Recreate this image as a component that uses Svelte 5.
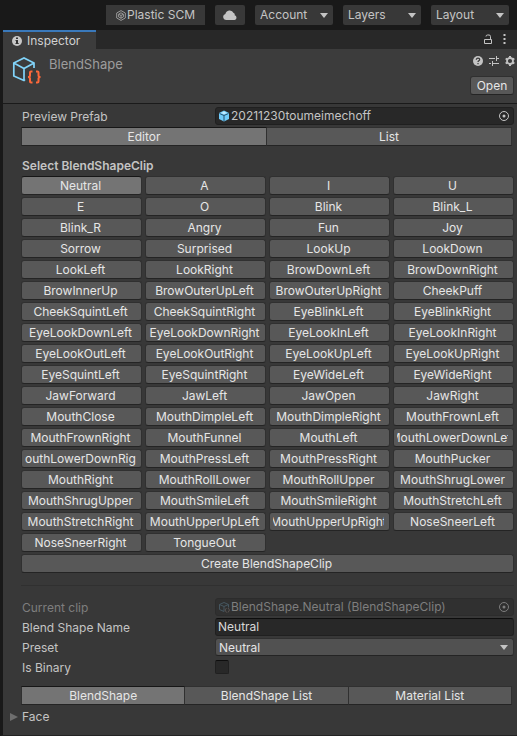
<script>
    const clips = [
        'Neutral', 'A', 'I', 'U',
        'E', 'O', 'Blink', 'Blink_L',
        'Blink_R', 'Angry', 'Fun', 'Joy',
        'Sorrow', 'Surprised', 'LookUp', 'LookDown',
        'LookLeft', 'LookRight', 'BrowDownLeft', 'BrowDownRight',
        'BrowInnerUp', 'BrowOuterUpLeft', 'BrowOuterUpRight', 'CheekPuff',
        'CheekSquintLeft', 'CheekSquintRight', 'EyeBlinkLeft', 'EyeBlinkRight',
        'EyeLookDownLeft', 'EyeLookDownRight', 'EyeLookInLeft', 'EyeLookInRight',
        'EyeLookOutLeft', 'EyeLookOutRight', 'EyeLookUpLeft', 'EyeLookUpRight',
        'EyeSquintLeft', 'EyeSquintRight', 'EyeWideLeft', 'EyeWideRight',
        'JawForward', 'JawLeft', 'JawOpen', 'JawRight',
        'MouthClose', 'MouthDimpleLeft', 'MouthDimpleRight', 'MouthFrownLeft',
        'MouthFrownRight', 'MouthFunnel', 'MouthLeft', 'MouthLowerDownLeft',
        'MouthLowerDownRight', 'MouthPressLeft', 'MouthPressRight', 'MouthPucker',
        'MouthRight', 'MouthRollLower', 'MouthRollUpper', 'MouthShrugLower',
        'MouthShrugUpper', 'MouthSmileLeft', 'MouthSmileRight', 'MouthStretchLeft',
        'MouthStretchRight', 'MouthUpperUpLeft', 'MouthUpperUpRight', 'NoseSneerLeft',
        'NoseSneerRight', 'TongueOut'
    ];
    const menus = ['Account', 'Layers', 'Layout'];
    const modes = ['Editor', 'List'];
    const pages = ['BlendShape', 'BlendShape List', 'Material List'];

    let clip = $state('Neutral');
    let mode = $state('Editor');
    let page = $state('BlendShape');
    let name = $state('Neutral');
    let binary = $state(false);
</script>

{#snippet arrow()}
    <svg class="arrow" width="8" height="5" viewBox="0 0 8 5"><path d="M0 0h8L4 5z" fill="currentColor" /></svg>
{/snippet}

{#snippet picker()}
    <svg width="12" height="12" viewBox="0 0 12 12">
        <circle cx="6" cy="6" r="4.5" fill="none" stroke="currentColor" />
        <circle cx="6" cy="6" r="1.5" fill="currentColor" />
    </svg>
{/snippet}

<div class="window">
    <header class="toolbar">
        <button class="plastic">
            <svg width="10" height="11" viewBox="0 0 10 11" fill="none" stroke="#999">
                <path d="M5 .6 9.3 3v5L5 10.4.7 8V3z" />
                <path d="M5 2.8 7.4 4.2v2.7L5 8.2 2.6 6.9V4.2zM5 5.5v3M2.8 4.3 5 5.5l2.2-1.2" />
            </svg>
            Plastic SCM
        </button>
        <button class="cloud" aria-label="Cloud">
            <svg width="14" height="10" viewBox="0 0 14 10">
                <path d="M3 10a3 3 0 0 1-.6-5.9A4.3 4.3 0 0 1 10.6 3a1.8 1.8 0 0 1 1 2.3A2.4 2.4 0 0 1 11.6 10z" fill="#c4c4c4" />
            </svg>
        </button>
        {#each menus as menu}
            <div class="menu">
                <select aria-label={menu}><option>{menu}</option></select>
                {@render arrow()}
            </div>
        {/each}
    </header>

    <main class="panel">
        <div class="tabbar">
            <div class="tab">
                <svg width="10" height="10" viewBox="0 0 10 10">
                    <circle cx="5" cy="5" r="5" fill="#c8c8c8" />
                    <path d="M4 1.5h2V3H4zM3.500 4H6v3h.7v1H3.500V7H4V5h-.5z" fill="#333" />
                </svg>
                Inspector
            </div>
            <div class="tab-tools">
                <svg width="10" height="11" viewBox="0 0 10 11" fill="none" stroke="#c4c4c4">
                    <path d="M1.500 5.500h7v4h-7zM7.500 5.500v-3q0-1.500-1.500-1.500h-1.500q-1.500 0-1.500 1.500" />
                </svg>
                <svg width="3" height="11" viewBox="0 0 3 11" fill="#c4c4c4"><path d="M.5 0h2v2h-2zM.5 4h2v2h-2zM.5 8h2v2h-2z" /></svg>
            </div>
        </div>

        <section class="asset">
            <svg class="asset-icon" width="30" height="30" viewBox="0 0 30 30" fill="none">
                <path d="M13 23.500 12 24.500 1.800 20V7L12 2l10 5v5M1.800 7 12 12.500 22 7M12 12.500v12" stroke="#81d4fa" stroke-width="1.700" />
                <path d="M20.500 15.500H19q-1 0-1 1v3q0 1.500-2 1.500 2 0 2 1.500v3q0 1 1 1h1.500M24 15.500h1.500q1 0 1 1v3q0 1.500 2 1.500-2 0-2 1.500v3q0 1-1 1H24" stroke="#ff6839" stroke-width="2" />
            </svg>
            <h1>BlendShape</h1>
            <div class="asset-side">
                <div class="asset-tools">
                    <svg width="10" height="10" viewBox="0 0 10 10">
                        <circle cx="5" cy="5" r="5" fill="#c4c4c4" />
                        <path d="M3.300 3.800q0-1.600 1.700-1.600t1.700 1.400q0 .9-1 1.300-.7.300-.7 1.100M5 7v1.200" fill="none" stroke="#383838" stroke-width="1.200" />
                    </svg>
                    <svg width="10" height="10" viewBox="0 0 10 10" fill="none" stroke="#c4c4c4">
                        <path d="M0 2.500h6M8 2.500h2M7.500 0v5M0 7.500h2M4 7.500h6M3.500 5v5" />
                    </svg>
                    <svg width="10" height="10" viewBox="0 0 10 10" fill="none" stroke="#c4c4c4">
                        <circle cx="5" cy="5" r="3" stroke-width="1.800" />
                        <path d="M5 0v1.500M5 8.500V10M.7 2.500 2 3.300M8 6.700l1.300.8M.7 7.500 2 6.700M8 3.300l1.300-.8" stroke-width="2" />
                    </svg>
                </div>
                <button class="btn open">Open</button>
            </div>
        </section>

        <section class="body">
            <div class="row">
                <span>Preview Prefab</span>
                <div class="object">
                    <svg width="12" height="12" viewBox="0 0 12 12">
                        <path d="M6 .5 11 3v6l-5 2.500L1 9V3z" fill="#6fcbfa" />
                        <path d="M1.500 3.500 6 5.500l4.500-2M6 5.500v5.500" fill="none" stroke="#24506e" />
                        <path d="M3 3 6 1.500 9 3 6 4.300z" fill="#c3ebff" />
                    </svg>
                    <span>20211230toumeimechoff</span>
                    <button class="pick" aria-label="Pick prefab">{@render picker()}</button>
                </div>
            </div>

            <div class="segments">
                {#each modes as m}
                    <button class="btn" class:active={mode === m} onclick={() => (mode = m)}>{m}</button>
                {/each}
            </div>

            <h2>Select BlendShapeClip</h2>
            <div class="clips">
                {#each clips as c}
                    <button class="btn" class:active={clip === c} onclick={() => (clip = c)}><span>{c}</span></button>
                {/each}
            </div>
            <button class="btn create">Create BlendShapeClip</button>

            <hr />

            <div class="fields">
                <div class="row disabled">
                    <span>Current clip</span>
                    <div class="object">
                        <svg width="12" height="12" viewBox="0 0 12 12" fill="none">
                            <path d="M6 10.500 1.500 8.500v-5L6 1.500l4.500 2v3M1.500 3.500 6 5.500l4.500-2M6 5.500v5" stroke="#465761" />
                            <path d="M8.500 7 7 9l1.500 2.500M10 7l1.500 2-1.500 2.500" stroke="#5a5452" />
                        </svg>
                        <span>BlendShape.Neutral (BlendShapeClip)</span>
                        <button class="pick" aria-label="Pick clip" disabled>{@render picker()}</button>
                    </div>
                </div>
                <div class="row">
                    <label for="name">Blend Shape Name</label>
                    <input id="name" class="text" type="text" bind:value={name} />
                </div>
                <div class="row">
                    <label for="preset">Preset</label>
                    <div class="preset">
                        <select id="preset"><option>Neutral</option></select>
                        {@render arrow()}
                    </div>
                </div>
                <div class="row">
                    <label for="binary">Is Binary</label>
                    <input id="binary" class="check" type="checkbox" bind:checked={binary} />
                </div>
            </div>

            <div class="segments pages">
                {#each pages as p}
                    <button class="btn" class:active={page === p} onclick={() => (page = p)}>{p}</button>
                {/each}
            </div>

            <button class="foldout">
                <svg width="8" height="8" viewBox="0 0 8 8"><path d="M0 0v8l8-4z" fill="#6e6e6e" /></svg>
                Face
            </button>
        </section>
    </main>
</div>

<style>
    :global(body) {
        background: #383838;
    }

    .window {
        min-height: 100vh;
        display: flex;
        flex-direction: column;
        box-sizing: border-box;
        color: #c4c4c4;
        font: 12px/18px Inter, sans-serif;
    }

    button,
    select,
    input {
        box-sizing: border-box;
        margin: 0;
        padding: 0;
        border: 0;
        font: inherit;
        color: inherit;
        appearance: none;
    }

    svg {
        display: block;
        flex: none;
    }

    h1,
    h2 {
        margin: 0;
        font-size: inherit;
    }

    /* top toolbar */
    .toolbar {
        display: flex;
        justify-content: flex-end;
        align-items: center;
        gap: 10px;
        height: 30px;
        padding-right: 8px;
        background: #191919;
    }

    .plastic {
        display: flex;
        align-items: center;
        justify-content: center;
        gap: 1px;
        width: 99px;
        height: 20px;
        background: #383838;
    }

    .cloud {
        display: flex;
        align-items: center;
        justify-content: center;
        width: 30px;
        height: 20px;
        border-radius: 2px;
        background: #383838;
    }

    .menu,
    .preset {
        display: flex;
        position: relative;
    }

    .menu {
        width: 78px;
        height: 20px;
    }

    .menu select {
        width: 100%;
        padding-left: 5px;
        border-radius: 2px;
        background: #383838;
    }

    .arrow {
        position: absolute;
        right: 5px;
        top: 8px;
        pointer-events: none;
    }

    .preset .arrow {
        right: 6px;
        top: 7px;
    }

    /* inspector */
    .panel {
        flex: 1;
        border-left: 3px solid #191919;
        border-bottom: 1px solid #232323;
        background: #383838;
    }

    .tabbar {
        display: flex;
        justify-content: space-between;
        height: 19px;
        background: #282828;
    }

    .tab {
        display: flex;
        align-items: center;
        gap: 5px;
        box-sizing: border-box;
        width: 93px;
        padding-left: 9px;
        border-top: 2px solid #3a79bb;
        background: #3c3c3c;
        color: #d2d2d2;
    }

    .tab-tools {
        display: flex;
        align-items: center;
        gap: 10px;
        padding-right: 11px;
    }

    .asset {
        display: flex;
        box-sizing: border-box;
        height: 55px;
        padding: 7px 3px 0 9px;
        border-bottom: 1px solid #1a1a1a;
        background: #3c3c3c;
    }

    .asset h1 {
        margin-left: 7px;
        font-size: 13px;
        font-weight: 400;
        color: #9c9c9c;
        line-height: 16px;
    }

    .asset-side {
        display: flex;
        flex-direction: column;
        align-items: flex-end;
        gap: 10px;
        margin-left: auto;
    }

    .asset-tools {
        display: flex;
        gap: 6px;
        margin-right: -1px;
    }

    .btn {
        height: 19px;
        border: 1px solid #303030;
        border-bottom-color: #242424;
        border-radius: 3px;
        background: #585858;
        color: #e6e6e6;
        line-height: 17px;
        text-align: center;
    }

    .btn.active {
        border-top-color: #161616;
        background: #747474;
    }

    .open {
        width: 44px;
    }

    .body {
        padding: 3px 3px 8px 18px;
    }

    .row {
        display: grid;
        grid-template-columns: 194px 1fr;
        min-height: 18px;
    }

    .row > :first-child {
        padding-left: 1px;
        line-height: 20px;
        height: 18px;
    }

    .disabled {
        color: #7e7e7e;
    }

    .object {
        display: flex;
        align-items: center;
        box-sizing: border-box;
        height: 18px;
        padding: 0 3px 0 2px;
        border: 1px solid #202020;
        border-radius: 3px;
        background: #282828;
    }

    .disabled .object {
        border-color: #2c2c2c;
        background: #303030;
    }

    .object span {
        flex: 1;
        padding-left: 1px;
    }

    .pick {
        background: none;
    }

    .segments {
        display: flex;
        margin: 2px 2px 0 0;
    }

    .segments .btn {
        flex: 1;
        border-radius: 0;
    }

    .segments .btn + .btn {
        border-left: 0;
    }

    h2 {
        margin: 11px 0 1px 1px;
        font-weight: 600;
    }

    .clips {
        display: grid;
        grid-template-columns: repeat(4, 1fr);
        gap: 2px 3px;
    }

    .clips .btn {
        min-width: 0;
        padding: 0 5px 0 3px;
    }

    .clips span {
        display: flex;
        justify-content: center;
        overflow: hidden;
    }

    .create {
        display: block;
        width: 100%;
        margin-top: 2px;
        padding-right: 2px;
    }

    hr {
        height: 1px;
        margin: 12px 0;
        border: 0;
        background: #303030;
    }

    .fields {
        display: flex;
        flex-direction: column;
        gap: 2px;
    }

    .text {
        min-width: 0;
        height: 18px;
        padding: 0 2px;
        border: 1px solid #202020;
        border-top-color: #0d0d0d;
        border-radius: 3px;
        background: #282828;
        color: #d8d8d8;
    }

    .preset select {
        width: 100%;
        height: 18px;
        padding: 0 0 2px 3px;
        border: 1px solid #303030;
        border-bottom-color: #242424;
        border-radius: 3px;
        background: #515151;
        color: #e4e4e4;
    }

    .check {
        align-self: center;
        width: 14px;
        height: 14px;
        border: 1px solid #202020;
        border-top-color: #0d0d0d;
        border-radius: 2px;
        background: #282828;
    }

    .check:checked {
        background: #c4c4c4;
    }

    .pages {
        margin-top: 10px;
    }

    .foldout {
        display: flex;
        align-items: center;
        gap: 4px;
        margin: 3px 0 0 -11px;
        background: none;
    }
</style>
